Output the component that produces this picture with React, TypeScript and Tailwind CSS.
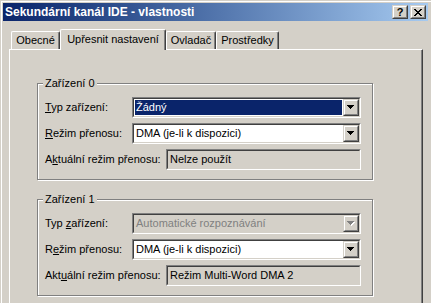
import type { ReactNode } from 'react'

// Windows 2000 style property sheet: "Sekundární kanál IDE - vlastnosti"

function Sunken({ children, className = '', inner = 'bg-white' }: { children?: ReactNode; className?: string; inner?: string }) {
  return (
    <div className={`border border-t-[#808080] border-l-[#808080] border-b-white border-r-white ${className}`}>
      <div className={`h-full border border-t-[#404040] border-l-[#404040] border-b-[#D4D0C8] border-r-[#D4D0C8] ${inner}`}>
        {children}
      </div>
    </div>
  )
}

function Raised({ children, className = '' }: { children?: ReactNode; className?: string }) {
  return (
    <div className={`border border-t-[#D4D0C8] border-l-[#D4D0C8] border-b-[#404040] border-r-[#404040] ${className}`}>
      <div className="h-full w-full border border-t-white border-l-white border-b-[#808080] border-r-[#808080] bg-[#D4D0C8] flex items-center justify-center">
        {children}
      </div>
    </div>
  )
}

function Arrow({ disabled }: { disabled?: boolean }) {
  const d = 'M0 0h7v1H0z M1 1h5v1H1z M2 2h3v1H2z M3 3h1v1H3z'
  return (
    <svg width="8" height="5" viewBox="0 0 8 5" shapeRendering="crispEdges" className="block">
      {disabled && <path d={d} fill="#fff" transform="translate(1 1)" />}
      <path d={d} fill={disabled ? '#808080' : '#000'} />
    </svg>
  )
}

function Combo({ value, selected, disabled }: { value: string; selected?: boolean; disabled?: boolean }) {
  return (
    <Sunken className="w-[229px] h-[21px]" inner={disabled ? 'bg-[#D4D0C8]' : 'bg-white'}>
      <div className="flex h-full">
        <div className="flex-1 p-px">
          <div
            className={`h-full flex items-center pl-px ${selected ? 'bg-[#0A246A] text-white' : ''} ${
              disabled ? 'text-[#808080]' : ''
            }`}
          >
            {value}
          </div>
        </div>
        <Raised className="w-[16px] h-full">
          <Arrow disabled={disabled} />
        </Raised>
      </div>
    </Sunken>
  )
}

function ReadOnly({ value }: { value: string }) {
  return (
    <Sunken className="w-[195px] h-[21px]" inner="bg-[#D4D0C8]">
      <div className="h-full flex items-center pl-[2px]">{value}</div>
    </Sunken>
  )
}

function Label({ pre, acc, post, width }: { pre: string; acc: string; post: string; width: string }) {
  return (
    <div className={`${width} shrink-0`}>
      {pre}
      <u>{acc}</u>
      {post}
    </div>
  )
}

type GroupProps = {
  title: string
  typ: [string, string, string]
  rezim: [string, string, string]
  akt: [string, string, string]
  typValue: string
  typSelected?: boolean
  typDisabled?: boolean
  aktValue: string
  className?: string
}

function Group(p: GroupProps) {
  return (
    <div
      className={`relative w-[336px] border border-[#808080] shadow-[inset_1px_1px_0_#fff,1px_1px_0_#fff] pt-[13px] pb-[9px] pl-[7px] flex flex-col gap-[5px] ${
        p.className ?? ''
      }`}
    >
      <div className="absolute -top-[7px] left-[5px] px-[2px] bg-[#D4D0C8] leading-[13px]">{p.title}</div>
      <div className="flex items-center h-[21px]">
        <Label width="w-[87px]" pre={p.typ[0]} acc={p.typ[1]} post={p.typ[2]} />
        <Combo value={p.typValue} selected={p.typSelected} disabled={p.typDisabled} />
      </div>
      <div className="flex items-center h-[21px]">
        <Label width="w-[87px]" pre={p.rezim[0]} acc={p.rezim[1]} post={p.rezim[2]} />
        <Combo value="DMA (je-li k dispozici)" />
      </div>
      <div className="flex items-center h-[21px]">
        <Label width="w-[121px]" pre={p.akt[0]} acc={p.akt[1]} post={p.akt[2]} />
        <ReadOnly value={p.aktValue} />
      </div>
    </div>
  )
}

function Tab({ label, selected, width }: { label: string; selected?: boolean; width: string }) {
  return (
    <div
      className={`${width} flex items-center justify-center border-t border-l border-white border-r border-r-[#404040] shadow-[inset_-1px_0_0_#808080] rounded-tl-[2px] rounded-tr-[2px] bg-[#D4D0C8] ${
        selected ? 'relative z-10 h-[21px] -mb-px pb-[2px]' : 'h-[18px]'
      }`}
    >
      {label}
    </div>
  )
}

function CaptionButton({ children }: { children: ReactNode }) {
  return <Raised className="w-[16px] h-[14px]">{children}</Raised>
}

export default function App() {
  return (
    <div className="w-[431px] h-[303px] overflow-hidden bg-[#D4D0C8] pl-px pt-px font-['Liberation_Sans',Arial,sans-serif] text-[11px] leading-none text-black select-none">
      <div className="h-full border-l border-t border-white pl-px pt-px pr-[3px]">
        {/* title bar */}
        <div className="h-[18px] bg-linear-to-r from-[#0A246A] to-[#A6CAF0] flex items-center pl-[2px] pr-[2px]">
          <span className="text-white font-bold text-[12px]">Sekundární kanál IDE - vlastnosti</span>
          <div className="ml-auto flex gap-[2px]">
            <CaptionButton>
              <span className="font-bold text-[11px] leading-none">?</span>
            </CaptionButton>
            <CaptionButton>
              <svg width="8" height="7" viewBox="0 0 8 7" shapeRendering="crispEdges" className="block">
                <path
                  d="M0 0h2v1H0z M6 0h2v1H6z M1 1h2v1H1z M5 1h2v1H5z M2 2h4v1H2z M3 3h2v1H3z M2 4h4v1H2z M1 5h2v1H1z M5 5h2v1H5z M0 6h2v1H0z M6 6h2v1H6z"
                  fill="#000"
                />
              </svg>
            </CaptionButton>
          </div>
        </div>

        {/* client area */}
        <div className="pt-[8px] pl-[6px]">
          <div className="flex items-end h-[20px] pl-[2px]">
            <Tab width="w-[49px]" label="Obecné" />
            <Tab width="w-[106px]" label="Upřesnit nastavení" selected />
            <Tab width="w-[50px]" label="Ovladač" />
            <Tab width="w-[63px]" label="Prostředky" />
          </div>
          <div className="w-[414px] h-[260px] border-t border-l border-white border-r border-r-[#404040] shadow-[inset_-1px_0_0_#808080] pt-[33px] pl-[27px]">
            <Group
              title="Zařízení 0"
              typ={['', 'T', 'yp zařízení:']}
              rezim={['', 'R', 'ežim přenosu:']}
              akt={['A', 'k', 'tuální režim přenosu:']}
              typValue="Žádný"
              typSelected
              aktValue="Nelze použít"
            />
            <Group
              className="mt-[19px]"
              title="Zařízení 1"
              typ={['Typ ', 'z', 'ařízení:']}
              rezim={['R', 'e', 'žim přenosu:']}
              akt={['Akt', 'u', 'ální režim přenosu:']}
              typValue="Automatické rozpoznávání"
              typDisabled
              aktValue="Režim Multi-Word DMA 2"
            />
          </div>
        </div>
      </div>
    </div>
  )
}
